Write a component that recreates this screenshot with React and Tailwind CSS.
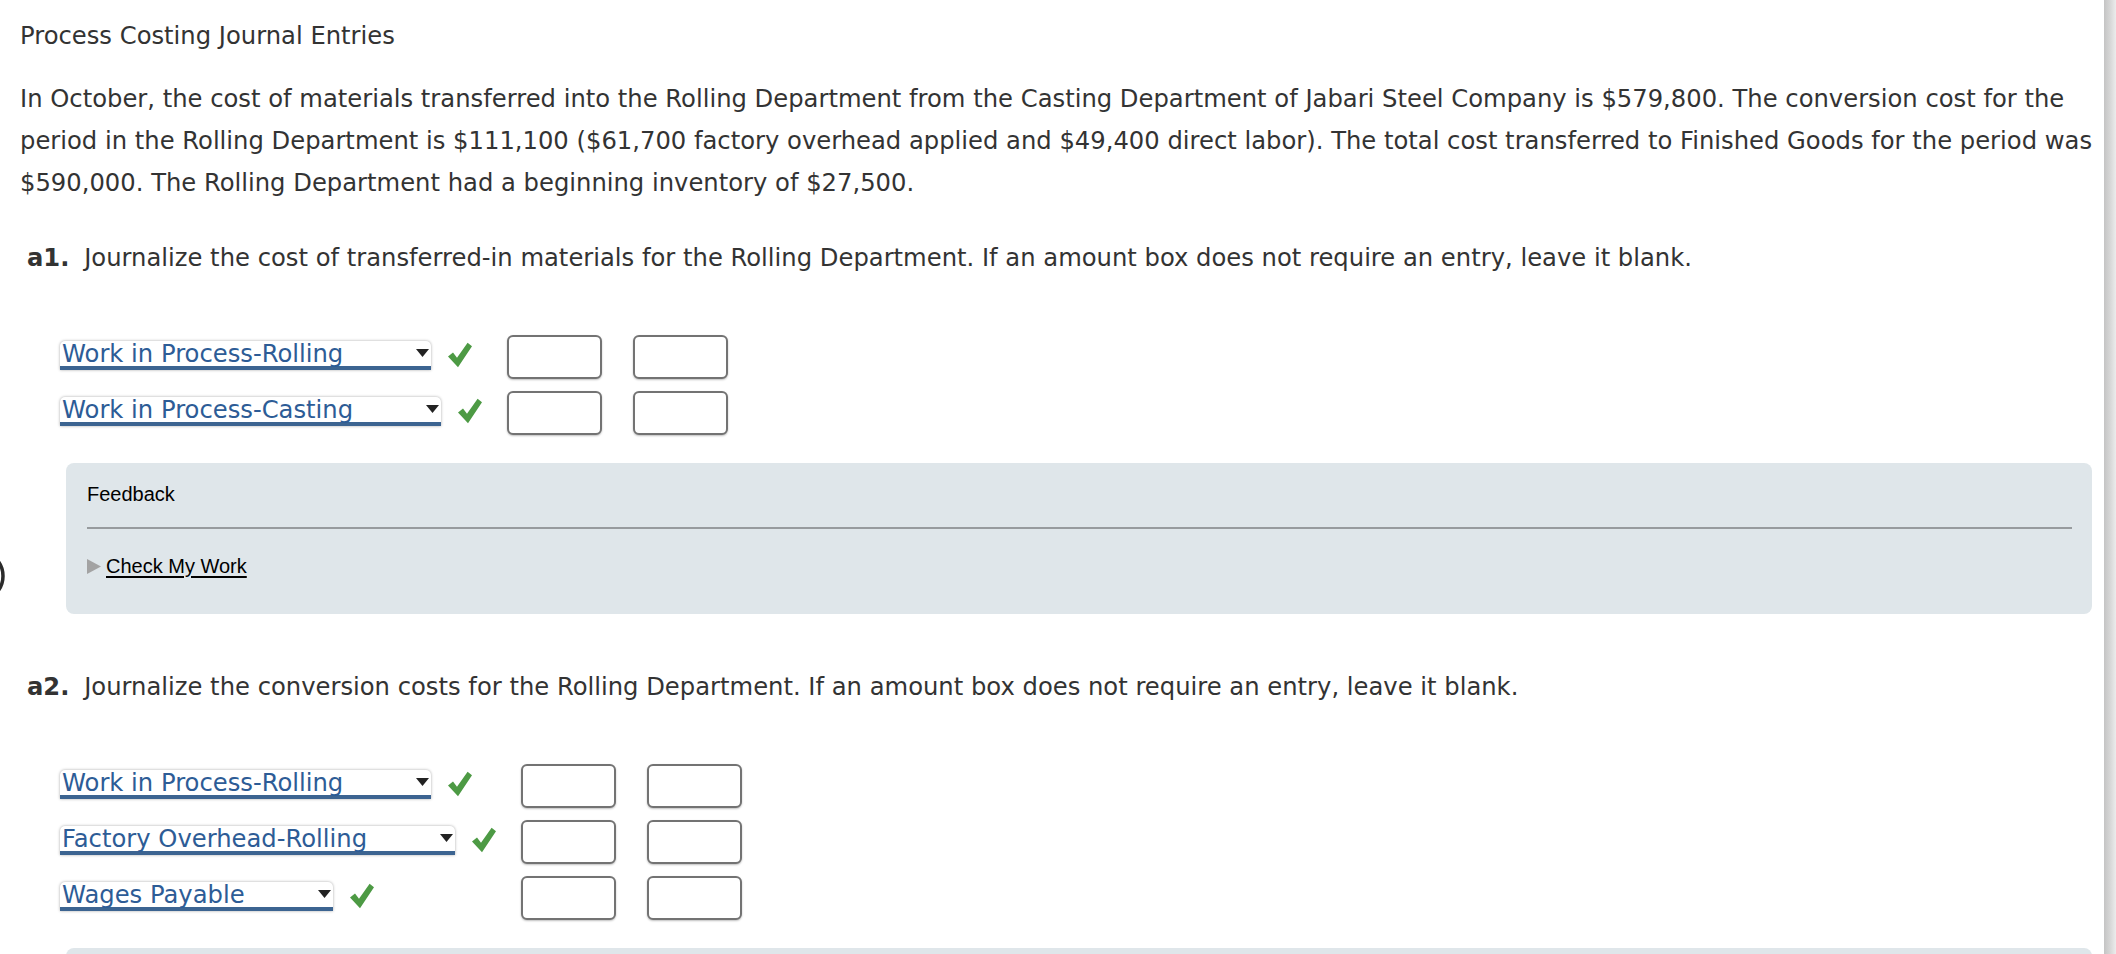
import React from 'react';

const verdana = { fontFamily: '"DejaVu Sans", Verdana, sans-serif' };

function Check() {
  return (
    <svg width="24" height="26" viewBox="0 0 24 26" className="shrink-0">
      <path d="M0 14.4 L5 10.6 L9 15.8 L19.6 0.8 L24 4.2 L10 25.2 Z" fill="#4d9a44" />
    </svg>
  );
}

function Account({ label }) {
  return (
    <div className="flex items-center mb-[4px]">
      <div className="flex items-center h-[29px] bg-white rounded-t-[5px] border-b-[4px] border-[#3c6491] shadow-[0_0_3px_rgba(0,0,0,0.35)] pl-[2px] pr-[2px]">
        <span className="text-[24.25px] leading-[25px] text-[#2d5c96] whitespace-nowrap">{label}</span>
        <span className="w-[73px]" />
        <svg width="13" height="8" viewBox="0 0 13 8">
          <polygon points="0,0 13,0 6.5,8" fill="#222" />
        </svg>
      </div>
      <div className="ml-[17px]">
        <Check />
      </div>
    </div>
  );
}

function Amount() {
  return (
    <div className="w-[95px] h-[44px] border-2 border-[#737373] rounded-[6px] bg-white shadow-[0_1px_2px_rgba(0,0,0,0.25)]" />
  );
}

function Entries({ rows }) {
  return (
    <div className="ml-[40px] grid grid-cols-[max-content_max-content_max-content] auto-rows-[56px] items-center">
      {rows.map((r) => (
        <React.Fragment key={r}>
          <Account label={r} />
          <div className="ml-[25px]"><Amount /></div>
          <div className="ml-[31px]"><Amount /></div>
        </React.Fragment>
      ))}
    </div>
  );
}

function Feedback({ empty }) {
  if (empty) {
    return <div className="ml-[46px] mr-[12px] h-[151px] bg-[#dfe6ea] rounded-[8px]" />;
  }
  return (
    <div
      className="ml-[46px] mr-[12px] bg-[#dfe6ea] rounded-[8px] pt-[19px] pb-[36px] pl-[21px] pr-[20px]"
      style={{ fontFamily: '"Liberation Sans", Arial, sans-serif' }}
    >
      <div className="text-[20px] leading-[24px] text-black">Feedback</div>
      <div className="h-[2px] bg-[#979b9e] mt-[21px]" />
      <div className="flex items-center mt-[25px] text-[20px] leading-[24px]">
        <svg width="14" height="15" viewBox="0 0 14 15" className="mr-[5px]">
          <polygon points="0,0 14,7.5 0,15" fill="#a3a3a3" />
        </svg>
        <span className="underline text-black underline-offset-[3px]">Check My Work</span>
      </div>
    </div>
  );
}

export default function App() {
  return (
    <div className="relative flex w-[2116px] min-h-[954px] bg-white overflow-hidden" style={verdana}>
      <svg width="8" height="56" viewBox="0 0 8 56" className="absolute left-0 top-[548px]">
        <circle cx="-22" cy="28" r="25" fill="none" stroke="#2b2b2b" strokeWidth="3.5" />
      </svg>

      <div className="flex-1 pl-[20px] text-[#333] text-[24.25px]">
        <h1 className="mt-[15px] text-[24.25px] leading-[42px] font-normal">Process Costing Journal Entries</h1>

        <p className="mt-[21px] leading-[42px]">
          In October, the cost of materials transferred into the Rolling Department from the Casting Department of Jabari Steel Company is $579,800. The conversion cost for the period in the Rolling Department is $111,100 ($61,700 factory overhead applied and $49,400 direct labor). The total cost transferred to Finished Goods for the period was $590,000. The Rolling Department had a beginning inventory of $27,500.
        </p>

        <div className="mt-[33px] ml-[7px] leading-[42px]">
          <span className="font-bold mr-[7px]">a1.</span> Journalize the cost of transferred-in materials for the Rolling Department. If an amount box does not require an entry, leave it blank.
        </div>

        <div className="mt-[50px]">
          <Entries rows={['Work in Process-Rolling', 'Work in Process-Casting']} />
        </div>

        <div className="mt-[22px]">
          <Feedback />
        </div>

        <div className="mt-[52px] ml-[7px] leading-[42px]">
          <span className="font-bold mr-[7px]">a2.</span> Journalize the conversion costs for the Rolling Department. If an amount box does not require an entry, leave it blank.
        </div>

        <div className="mt-[50px]">
          <Entries rows={['Work in Process-Rolling', 'Factory Overhead-Rolling', 'Wages Payable']} />
        </div>

        <div className="mt-[22px]">
          <Feedback empty />
        </div>
      </div>

      <div className="w-[12px] shrink-0 bg-gradient-to-r from-[#c4c4c4] via-[#d6d6d6] to-[#ececec]" />
    </div>
  );
}
